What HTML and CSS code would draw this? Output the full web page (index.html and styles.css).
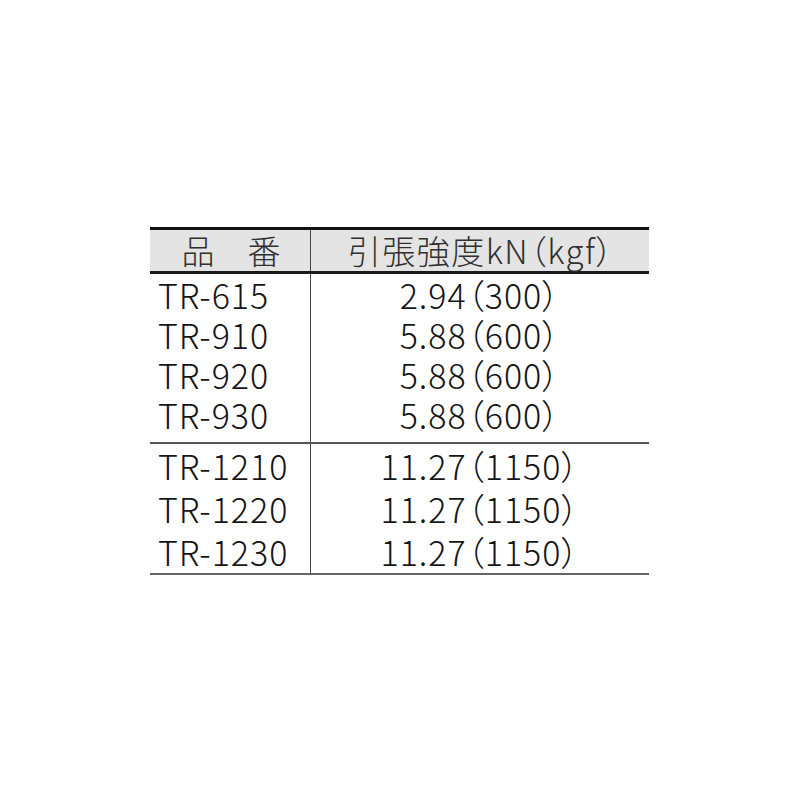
FILE: index.html
```html
<!DOCTYPE html>
<html lang="ja">
<head>
<meta charset="utf-8">
<link rel="stylesheet" href="styles.css">
</head>
<body>
<div class="page">
  <div class="spec">
    <div class="head">
      <div class="c1 hcell">品　番</div>
      <div class="c2 hcell">引張強度kN（kgf）</div>
    </div>
    <div class="group g1">
      <div class="c1 col">
        <div>TR-615</div>
        <div>TR-910</div>
        <div>TR-920</div>
        <div>TR-930</div>
      </div>
      <div class="c2 col">
        <div>2.94（300）</div>
        <div>5.88（600）</div>
        <div>5.88（600）</div>
        <div>5.88（600）</div>
      </div>
    </div>
    <div class="group g2">
      <div class="c1 col">
        <div>TR-1210</div>
        <div>TR-1220</div>
        <div>TR-1230</div>
      </div>
      <div class="c2 col">
        <div>11.27（1150）</div>
        <div>11.27（1150）</div>
        <div>11.27（1150）</div>
      </div>
    </div>
  </div>
</div>
</body>
</html>
```
FILE: styles.css
```css
html, body {
  margin: 0;
  padding: 0;
  background: #ffffff;
}
.page {
  padding: 227px 0 0 150px;
}
.spec {
  width: 499px;
  border-top: 3px solid #111111;
  border-bottom: 2px solid #666666;
  font-family: "Noto Sans CJK JP", "Noto Sans", sans-serif;
  font-weight: 300;
  font-feature-settings: "palt" 1;
  color: #151515;
}
.head {
  display: flex;
  height: 41px;
  background: #e4e4e4;
  border-bottom: 3px solid #1a1a1a;
}
.hcell {
  font-size: 33px;
  line-height: 41px;
  color: #303030;
  text-align: center;
}
.c1.hcell {
  font-feature-settings: normal;
  padding-left: 2px;
  width: 158px;
}
.c2.hcell {
  letter-spacing: 1.5px;
  padding-left: 2px;
}
.c1 {
  width: 160px;
  border-right: 1px solid #444444;
}
.c2 {
  flex: 1;
  text-align: center;
}
.group {
  display: flex;
}
.col {
  font-size: 34px;
  letter-spacing: 1px;
}
.g1 .col {
  line-height: 40px;
  padding: 1px 0 7px;
}
.g1 {
  border-bottom: 2px solid #555555;
}
.g2 .col {
  line-height: 43px;
  padding: 0;
}
.c1.col {
  padding-left: 8px;
  width: 152px;
  text-align: left;
}
```
